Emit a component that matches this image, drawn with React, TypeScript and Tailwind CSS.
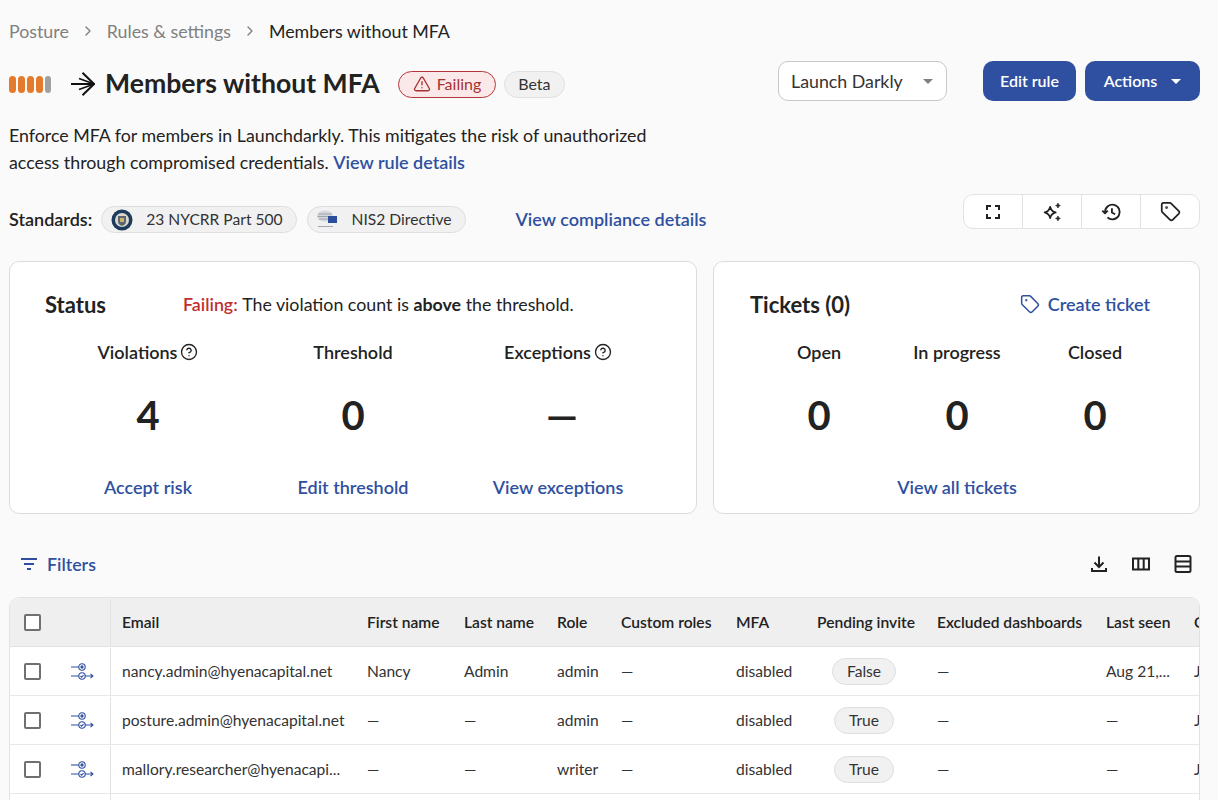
import { ChevronRight, CircleHelp, TriangleAlert, Tag } from 'lucide-react'

const columns = [
  'Email',
  'First name',
  'Last name',
  'Role',
  'Custom roles',
  'MFA',
  'Pending invite',
  'Excluded dashboards',
  'Last seen',
  'Created',
]

const rows = [
  {
    email: 'nancy.admin@hyenacapital.net',
    first: 'Nancy',
    last: 'Admin',
    role: 'admin',
    pending: 'False',
    seen: 'Aug 21,...',
    created: 'Jul 12,...',
  },
  {
    email: 'posture.admin@hyenacapital.net',
    first: '—',
    last: '—',
    role: 'admin',
    pending: 'True',
    seen: '—',
    created: 'Jul 12,...',
  },
  {
    email: 'mallory.researcher@hyenacapi...',
    first: '—',
    last: '—',
    role: 'writer',
    pending: 'True',
    seen: '—',
    created: 'Jul 12,...',
  },
]

const gridCols = 'grid grid-cols-[101px_244px_97px_93px_64px_115px_81px_120px_169px_88px_100px]'

function Caret({ className }: { className: string }) {
  return (
    <svg viewBox="0 0 10 5" className={`w-[10px] h-[5px] ${className}`}>
      <path d="M0 0h10L5 5z" fill="currentColor" />
    </svg>
  )
}

function RuleArrow() {
  return (
    <svg viewBox="0 0 24 24" className="w-6 h-6 text-[#111]" fill="none" stroke="currentColor" strokeWidth="2">
      <path d="M0 12h23" />
      <path d="M11.500 .8L23 12 11.500 23.200" />
      <path d="M8 6.500L23 12 8 17.500" strokeWidth="1.700" />
    </svg>
  )
}

function Sparkle() {
  return (
    <svg viewBox="0 0 24 24" className="w-[22px] h-[22px]" fill="none" stroke="currentColor" strokeWidth="2">
      <path d="M10 6.500c.9 3.500 2.500 5.100 6 6-3.500.9-5.100 2.500-6 6-.9-3.500-2.500-5.100-6-6 3.500-.9 5.100-2.500 6-6z" strokeLinejoin="round" />
      <path d="M18.500 2.500c.3 1.400.9 2 2.500 2.500-1.600.5-2.200 1.100-2.500 2.500-.3-1.400-.9-2-2.500-2.500 1.600-.5 2.200-1.100 2.500-2.500z" fill="currentColor" strokeWidth="1" />
      <path d="M18.500 16.500c.3 1.400.9 2 2.500 2.500-1.600.5-2.200 1.100-2.500 2.500-.3-1.400-.9-2-2.500-2.500 1.600-.5 2.200-1.100 2.500-2.500z" fill="currentColor" strokeWidth="1" />
    </svg>
  )
}

function History() {
  return (
    <svg viewBox="0 0 24 24" className="w-[22px] h-[22px]" fill="none" stroke="currentColor" strokeWidth="2">
      <path d="M5.500 12a8 8 0 1 1 2.600 5.900" />
      <path d="M2.500 10.500l3 3 3-3" strokeLinejoin="round" />
      <path d="M13 8v4.500l3.500 2" />
    </svg>
  )
}

function Focus() {
  return (
    <svg viewBox="0 0 14 14" className="w-[14px] h-[14px]" fill="none" stroke="currentColor" strokeWidth="2">
      <path d="M1 5V1h4M9 1h4v4M13 9v4H9M5 13H1V9" />
    </svg>
  )
}

function RowAction() {
  return (
    <svg viewBox="0 0 24 24" className="w-6 h-6 text-[#2f50a0]" fill="none" stroke="currentColor" strokeWidth="1.100">
      <path d="M1 7h8" />
      <circle cx="12" cy="7" r="3.200" />
      <circle cx="12" cy="7" r="1.100" fill="currentColor" />
      <path d="M1 16h8M15 16h8M20.500 13.800L23 16l-2.500 2.200" />
      <circle cx="12" cy="16" r="3.200" />
      <path d="M10.500 16l1.100 1.100 2-2" />
    </svg>
  )
}

function Checkbox() {
  return <span className="block w-[17px] h-[17px] rounded-[2px] border-2 border-[#707070] bg-white" />
}

function SealLogo() {
  return (
    <svg viewBox="0 0 22 22" className="w-[22px] h-[22px]">
      <circle cx="11" cy="11" r="10.500" fill="#1d3a5c" />
      <circle cx="11" cy="11" r="7" fill="#d8d8cf" />
      <path d="M7 7h8v6c0 2-2 3-4 4-2-1-4-2-4-4z" fill="#5b6770" />
      <path d="M9 9h4v4H9z" fill="#c9b46a" />
    </svg>
  )
}

function ParliamentLogo() {
  return (
    <svg viewBox="0 0 24 24" className="w-[24px] h-[24px]">
      <ellipse cx="9" cy="8" rx="8" ry="5.500" fill="#d4d7dc" />
      <path d="M2.500 6h13M1.500 8.500h14M3 11h11" stroke="#8f959e" strokeWidth=".8" />
      <path d="M12 8h9v7h-9z" fill="#2a4f9e" />
      <path d="M2 18.500h15" stroke="#9aa0a8" strokeWidth=".9" />
    </svg>
  )
}

function HelpIcon() {
  return <CircleHelp className="w-[18px] h-[18px]" strokeWidth={1.8} />
}

function Metric({ label, help, value, action }: { label: string; help?: boolean; value: string; action: string }) {
  return (
    <div className="flex flex-col items-center">
      <div className="flex items-center gap-[3px] h-6 text-[18px] font-semibold text-[#222]">
        {label}
        {help && <HelpIcon />}
      </div>
      <div className={`mt-[26px] h-[50px] leading-[50px] text-[40px] font-bold text-[#222] ${value === '—' ? 'pl-[8px]' : ''}`}>
        {value}
      </div>
      <a className="mt-[35px] text-[18px] leading-6 font-semibold text-[#2f50a0]">{action}</a>
    </div>
  )
}

function Pill({ children }: { children: React.ReactNode }) {
  return (
    <span className="inline-flex items-center h-[27px] rounded-full border border-[#dedede] bg-[#f1f1f1] text-[15.6px] text-[#333]">
      {children}
    </span>
  )
}

export default function App() {
  return (
    <div className="h-screen overflow-hidden bg-[#fafafa] pl-[9px] pr-[18px] pt-[19px] font-['Lato',sans-serif] text-[#222]">
      <nav className="flex items-center h-6 text-[17.8px] text-[#222]">
        <span className="text-[#808080]">Posture</span>
        <ChevronRight className="w-4 h-4 mx-[11px] text-[#808080]" />
        <span className="text-[#808080]">Rules &amp; settings</span>
        <ChevronRight className="w-4 h-4 mx-[11px] text-[#808080]" />
        <span>Members without MFA</span>
      </nav>

      <div className="mt-[18px] flex items-start justify-between">
        <div className="flex items-center h-[46px]">
          <div className="flex gap-[2px]">
            <span className="w-[7px] h-[17px] rounded-full bg-[#e37a2c]" />
            <span className="w-[7px] h-[17px] rounded-full bg-[#e37a2c]" />
            <span className="w-[7px] h-[17px] rounded-full bg-[#e37a2c]" />
            <span className="w-[7px] h-[17px] rounded-full bg-[#e37a2c]" />
            <span className="w-[6px] h-[17px] rounded-full bg-[#a0a0a0]" />
          </div>
          <div className="ml-[20px] mr-[10px]">
            <RuleArrow />
          </div>
          <h1 className="text-[26.6px] font-bold text-[#222]">Members without MFA</h1>
          <span className="ml-[18px] inline-flex items-center gap-[6px] h-[27px] px-[14px] rounded-full border border-[#b3373a] bg-[#fbe9e9] text-[16px] text-[#a8322f]">
            <TriangleAlert className="w-[18px] h-[18px]" strokeWidth={1.8} />
            Failing
          </span>
          <span className="ml-[8px] inline-flex items-center h-[27px] px-[13px] rounded-full border border-[#e0e0e0] bg-[#f1f1f1] text-[16px] text-[#333]">
            Beta
          </span>
        </div>
        <div className="flex items-center">
          <div className="flex items-center justify-between w-[169px] h-[40px] pl-[12px] pr-[13px] rounded-[10px] border border-[#c8c8c8] bg-white text-[17.8px] text-[#333]">
            Launch Darkly
            <Caret className="text-[#808080]" />
          </div>
          <button className="ml-[36px] w-[93px] h-[40px] rounded-[10px] bg-[#2f50a0] text-[16px] font-semibold text-white">
            Edit rule
          </button>
          <button className="ml-[9px] w-[115px] h-[40px] rounded-[10px] bg-[#2f50a0] text-[16px] font-semibold text-white flex items-center justify-center gap-[14px]">
            Actions
            <Caret className="text-white" />
          </button>
        </div>
      </div>

      <p className="mt-[15px] w-[660px] text-[17.8px] leading-[27px] text-[#222]">
        Enforce MFA for members in Launchdarkly. This mitigates the risk of unauthorized access through compromised
        credentials. <a className="text-[18px] font-semibold text-[#2f50a0]">View rule details</a>
      </p>

      <div className="mt-[18px] flex items-start justify-between h-[42px]">
        <div className="flex items-center mt-[12px] h-[27px]">
          <span className="text-[18px] font-semibold">Standards:</span>
          <div className="ml-[9px] flex items-center gap-[10px]">
            <Pill>
              <span className="ml-[9px] mr-[13px]"><SealLogo /></span>
              <span className="pr-[13px]">23 NYCRR Part 500</span>
            </Pill>
            <Pill>
              <span className="ml-[8px] mr-[12px]"><ParliamentLogo /></span>
              <span className="pr-[13px]">NIS2 Directive</span>
            </Pill>
          </div>
          <a className="ml-[50px] text-[18px] font-semibold text-[#2f50a0]">View compliance details</a>
        </div>
        <div className="flex items-center h-[35px] rounded-[10px] border border-[#e2e2e2] bg-white text-[#222] divide-x divide-[#e2e2e2]">
          <span className="w-[59px] h-full flex items-center justify-center"><Focus /></span>
          <span className="w-[59px] h-full flex items-center justify-center"><Sparkle /></span>
          <span className="w-[59px] h-full flex items-center justify-center"><History /></span>
          <span className="w-[58px] h-full flex items-center justify-center">
            <Tag className="w-[21px] h-[21px]" strokeWidth={2} />
          </span>
        </div>
      </div>

      <div className="mt-[25px] grid grid-cols-[688px_487px] gap-[16px]">
        <section className="h-[253px] rounded-[10px] border border-[#dcdcdc] bg-white pl-[36px] pr-[42px] pt-[30px]">
          <div className="flex items-center h-6">
            <h2 className="-ml-[1px] w-[138px] text-[22px] font-bold">Status</h2>
            <p className="text-[17.8px]">
              <span className="font-semibold text-[#bf2f2f]">Failing: </span>
              The violation count is <b>above</b> the threshold.
            </p>
          </div>
          <div className="mt-[24px] grid grid-cols-[204px_206px_204px]">
            <Metric label="Violations" help value="4" action="Accept risk" />
            <Metric label="Threshold" value="0" action="Edit threshold" />
            <Metric label="Exceptions" help value="—" action="View exceptions" />
          </div>
        </section>
        <section className="h-[253px] rounded-[10px] border border-[#dcdcdc] bg-white pl-[36px] pr-[49px] pt-[30px]">
          <div className="flex items-center justify-between h-6">
            <h2 className="text-[22px] font-bold">Tickets (0)</h2>
            <a className="flex items-center gap-[8px] text-[18px] font-semibold text-[#2f50a0]">
              <Tag className="w-5 h-5" strokeWidth={1.8} />
              Create ticket
            </a>
          </div>
          <div className="mt-[24px] grid grid-cols-3 w-[414px]">
            {['Open', 'In progress', 'Closed'].map((label) => (
              <div key={label} className="flex flex-col items-center">
                <div className="flex items-center h-6 text-[18px] font-semibold">{label}</div>
                <div className="mt-[26px] h-[50px] leading-[50px] text-[40px] font-bold">0</div>
              </div>
            ))}
          </div>
          <a className="block mt-[35px] w-[414px] text-center text-[18px] leading-6 font-semibold text-[#2f50a0]">
            View all tickets
          </a>
        </section>
      </div>

      <div className="mt-[36px] flex items-center justify-between h-7">
        <a className="flex items-center gap-[9px] ml-[11px] text-[17.8px] font-semibold text-[#2f50a0]">
          <svg viewBox="0 0 18 12" className="w-[18px] h-3" fill="none" stroke="currentColor" strokeWidth="1.800">
            <path d="M1 1h16M4 6h10M7 11h4" />
          </svg>
          Filters
        </a>
        <div className="flex items-center gap-[22px] mr-[7px] text-[#222]">
          <svg viewBox="0 0 20 20" className="w-5 h-5" fill="none" stroke="currentColor" strokeWidth="2">
            <path d="M3 14v3h14v-3" />
            <path d="M10 2.500v10M5.500 8.500l4.500 4.500 4.500-4.500" />
          </svg>
          <svg viewBox="0 0 20 20" className="w-5 h-5" fill="none" stroke="currentColor" strokeWidth="2">
            <path d="M2 4.500h16v11H2zM7.300 4.500v11M12.700 4.500v11" />
          </svg>
          <svg viewBox="0 0 20 20" className="w-5 h-5" fill="none" stroke="currentColor" strokeWidth="2">
            <rect x="2.500" y="2" width="15" height="16" rx="1.500" />
            <path d="M2.500 7.500h15M2.500 12.500h15" />
          </svg>
        </div>
      </div>

      <div className="mt-[19px] rounded-t-[10px] border border-[#e2e2e2] overflow-hidden bg-white">
        <div className={`${gridCols} h-[49px] pt-[1px] items-center bg-[#efefef] border-b border-[#e2e2e2] text-[15.6px] font-semibold whitespace-nowrap`}>
          <div className="h-full flex items-center pl-[14px] border-r border-[#e2e2e2]">
            <Checkbox />
          </div>
          {columns.map((col, i) => (
            <div key={col} className={`overflow-hidden ${i === 0 ? 'pl-[11px]' : 'pl-[12px]'}`}>
              {col}
            </div>
          ))}
        </div>
        {rows.map((row) => (
          <div key={row.email} className={`${gridCols} h-[49px] pt-[1px] items-center border-b border-[#e8e8e8] text-[15.6px] text-[#333] whitespace-nowrap`}>
            <div className="h-full flex items-center pl-[14px] border-r border-[#e2e2e2]">
              <Checkbox />
              <span className="ml-[29px]"><RowAction /></span>
            </div>
            <div className="pl-[11px]">{row.email}</div>
            <div className="pl-[12px]">{row.first}</div>
            <div className="pl-[12px]">{row.last}</div>
            <div className="pl-[12px]">{row.role}</div>
            <div className="pl-[12px]">—</div>
            <div className="pl-[12px]">disabled</div>
            <div className="flex justify-center pr-[2px]">
              <Pill><span className="px-[14px]">{row.pending}</span></Pill>
            </div>
            <div className="pl-[12px]">—</div>
            <div className="pl-[12px]">{row.seen}</div>
            <div className="pl-[12px]">{row.created}</div>
          </div>
        ))}
        <div className="h-[49px] flex">
          <div className="w-[101px] border-r border-[#e2e2e2]" />
        </div>
      </div>
    </div>
  )
}
